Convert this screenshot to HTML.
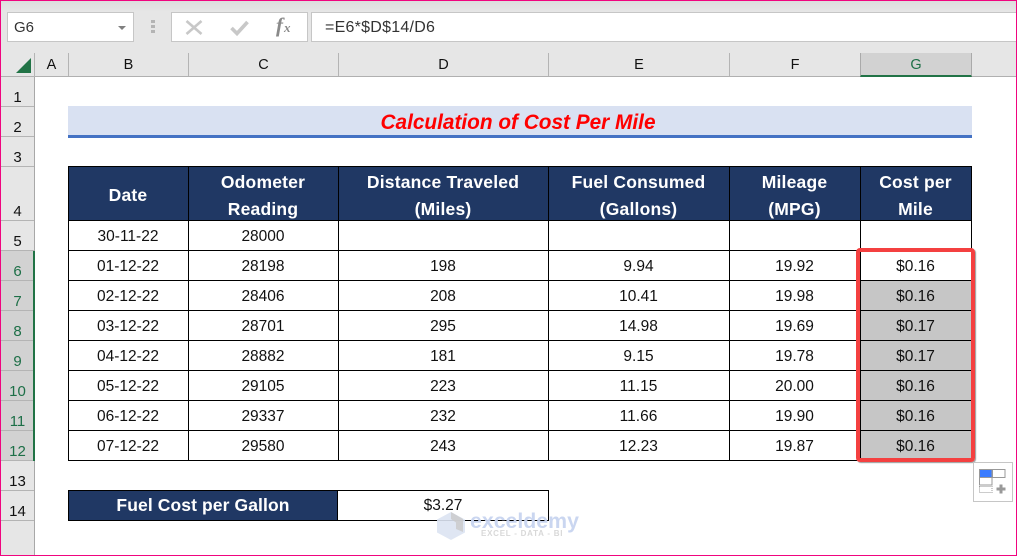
<!DOCTYPE html>
<html><head><meta charset="utf-8">
<style>
html,body{margin:0;padding:0}
body{width:1017px;height:556px;overflow:hidden;position:relative;background:#fff;font-family:"Liberation Sans",sans-serif;color:#111}
div{position:absolute;box-sizing:border-box}
.r{background:#000}
.t{text-align:center;font-size:15.5px;line-height:20px;height:20px;white-space:nowrap;margin-top:1px}
.h{text-align:center;font-size:17.5px;font-weight:bold;line-height:20px;height:20px;color:#fff;white-space:nowrap;letter-spacing:.2px}
.ch{top:53px;height:23px;text-align:center;font-size:14.5px;line-height:24px;border-right:1px solid #b4b4b4}
.rh{left:1px;width:33px;text-align:center;font-size:15px;border-bottom:1px solid #b4b4b4}
.rh span{position:absolute;left:0;width:33px;bottom:0;line-height:17px;text-align:center}
.s{background:#d2d2d2;color:#1d6f47}
.g{left:861px;width:110px;height:29px;background:#c6c6c6}
</style></head><body>
<!-- toolbar -->
<div style="left:0;top:0;width:1017px;height:53px;background:#e6e6e6"></div>
<div style="left:0;top:0;width:1017px;height:12px;background:linear-gradient(#dcdcdc,#e6e6e6)"></div>
<div style="left:7px;top:12px;width:127px;height:30px;background:#fff;border:1px solid #c6c6c6;font-size:15px;line-height:29px;padding-left:6px;color:#333">G6</div>
<div style="left:118px;top:26px;width:0;height:0;border-left:4px solid transparent;border-right:4px solid transparent;border-top:4px solid #808080"></div>
<div style="left:151px;top:20px;width:4px;height:3px;background:#b4b4b4"></div>
<div style="left:151px;top:25px;width:4px;height:3px;background:#b4b4b4"></div>
<div style="left:151px;top:30px;width:4px;height:3px;background:#b4b4b4"></div>
<div style="left:171px;top:12px;width:137px;height:30px;background:#fff;border:1px solid #c6c6c6"></div>
<svg style="position:absolute;left:171px;top:12px" width="137" height="30"><path d="M15.5 9L30.5 22M30.5 9L15.5 22" stroke="#c8c8c8" stroke-width="2.6" fill="none"/><path d="M60.5 16L66 21.5L76.5 10" stroke="#c8c8c8" stroke-width="3.6" fill="none"/><text x="105" y="20" font-family="Liberation Serif,serif" font-style="italic" font-weight="bold" font-size="21" fill="#8a8a8a">f</text><text x="113" y="20" font-family="Liberation Serif,serif" font-style="italic" font-weight="bold" font-size="13" fill="#8a8a8a">x</text></svg>
<div style="left:311px;top:12px;width:706px;height:30px;background:#fff;border:1px solid #c6c6c6;border-right:0;font-size:16px;line-height:29px;padding-left:13px;color:#333;letter-spacing:.25px">=E6*$D$14/D6</div>
<!-- column headers -->
<div style="left:0;top:42px;width:1017px;height:35px;background:#e6e6e6;border-bottom:1px solid #b0b0b0"></div>
<svg style="position:absolute;left:16px;top:58px" width="16" height="16"><path d="M15 0V15H0Z" fill="#217346"/></svg>
<div class="ch" style="left:35px;width:34px">A</div>
<div class="ch" style="left:69px;width:120px">B</div>
<div class="ch" style="left:189px;width:150px">C</div>
<div class="ch" style="left:339px;width:210px">D</div>
<div class="ch" style="left:549px;width:181px">E</div>
<div class="ch" style="left:730px;width:131px">F</div>
<div class="ch s" style="left:860px;width:112px;height:24px;border-left:1px solid #aaa;border-right:1px solid #aaa;border-bottom:2px solid #217346">G</div>
<div style="left:34px;top:53px;width:1px;height:24px;background:#b4b4b4"></div>
<!-- row headers -->
<div style="left:0;top:77px;width:35px;height:479px;background:#e6e6e6;border-right:1px solid #a8a8a8"></div>
<div class="rh" style="top:77px;height:30px"><span>1</span></div>
<div class="rh" style="top:107px;height:30px"><span>2</span></div>
<div class="rh" style="top:137px;height:30px"><span>3</span></div>
<div class="rh" style="top:167px;height:54px"><span>4</span></div>
<div class="rh" style="top:221px;height:30px"><span>5</span></div>
<div class="rh s" style="top:251px;height:30px;width:34px"><span>6</span></div>
<div class="rh s" style="top:281px;height:30px;width:34px"><span>7</span></div>
<div class="rh s" style="top:311px;height:30px;width:34px"><span>8</span></div>
<div class="rh s" style="top:341px;height:30px;width:34px"><span>9</span></div>
<div class="rh s" style="top:371px;height:30px;width:34px"><span>10</span></div>
<div class="rh s" style="top:401px;height:30px;width:34px"><span>11</span></div>
<div class="rh s" style="top:431px;height:30px;width:34px"><span>12</span></div>
<div class="rh" style="top:461px;height:30px"><span>13</span></div>
<div class="rh" style="top:491px;height:30px"><span>14</span></div>
<div style="left:33px;top:251px;width:2px;height:210px;background:#217346"></div>
<!-- title -->
<div style="left:68px;top:106px;width:904px;height:32px;background:#d9e1f2;border-bottom:3px solid #4472c4;text-align:center;color:#f00;font-weight:bold;font-style:italic;font-size:20.8px;line-height:34px;white-space:nowrap;padding-right:4px">Calculation of Cost Per Mile</div>
<!-- header bg -->
<div style="left:68px;top:166px;width:904px;height:55px;background:#203864"></div>
<!-- selection fill -->
<div class="g" style="top:281px"></div><div class="g" style="top:311px"></div><div class="g" style="top:341px"></div><div class="g" style="top:371px"></div><div class="g" style="top:401px"></div><div class="g" style="top:431px"></div>
<!-- grid lines -->
<div class="r" style="left:68px;top:166px;width:904px;height:1px"></div>
<div class="r" style="left:68px;top:220px;width:904px;height:1px"></div>
<div class="r" style="left:68px;top:250px;width:904px;height:1px"></div>
<div class="r" style="left:68px;top:280px;width:904px;height:1px"></div>
<div class="r" style="left:68px;top:310px;width:904px;height:1px"></div>
<div class="r" style="left:68px;top:340px;width:904px;height:1px"></div>
<div class="r" style="left:68px;top:370px;width:904px;height:1px"></div>
<div class="r" style="left:68px;top:400px;width:904px;height:1px"></div>
<div class="r" style="left:68px;top:430px;width:904px;height:1px"></div>
<div class="r" style="left:68px;top:460px;width:904px;height:1px"></div>
<div class="r" style="left:68px;top:166px;width:1px;height:295px"></div>
<div class="r" style="left:188px;top:166px;width:1px;height:295px"></div>
<div class="r" style="left:338px;top:166px;width:1px;height:295px"></div>
<div class="r" style="left:548px;top:166px;width:1px;height:295px"></div>
<div class="r" style="left:729px;top:166px;width:1px;height:295px"></div>
<div class="r" style="left:860px;top:166px;width:1px;height:295px"></div>
<div class="r" style="left:971px;top:166px;width:1px;height:295px"></div>
<!-- header text -->
<div class="h" style="left:68px;width:120px;top:185px">Date</div>
<div class="h" style="left:188px;width:150px;top:172px">Odometer</div>
<div class="h" style="left:188px;width:150px;top:199px">Reading</div>
<div class="h" style="left:338px;width:210px;top:172px">Distance Traveled</div>
<div class="h" style="left:338px;width:210px;top:199px">(Miles)</div>
<div class="h" style="left:548px;width:181px;top:172px">Fuel Consumed</div>
<div class="h" style="left:548px;width:181px;top:199px">(Gallons)</div>
<div class="h" style="left:729px;width:131px;top:172px">Mileage</div>
<div class="h" style="left:729px;width:131px;top:199px">(MPG)</div>
<div class="h" style="left:860px;width:111px;top:172px">Cost per</div>
<div class="h" style="left:860px;width:111px;top:199px">Mile</div>
<!-- rows -->
<div class="t" style="left:68px;width:120px;top:226px">30-11-22</div><div class="t" style="left:188px;width:150px;top:226px">28000</div>
<div class="t" style="left:68px;width:120px;top:256px">01-12-22</div><div class="t" style="left:188px;width:150px;top:256px">28198</div><div class="t" style="left:338px;width:210px;top:256px">198</div><div class="t" style="left:548px;width:181px;top:256px">9.94</div><div class="t" style="left:729px;width:131px;top:256px">19.92</div><div class="t" style="left:860px;width:111px;top:256px">$0.16</div>
<div class="t" style="left:68px;width:120px;top:286px">02-12-22</div><div class="t" style="left:188px;width:150px;top:286px">28406</div><div class="t" style="left:338px;width:210px;top:286px">208</div><div class="t" style="left:548px;width:181px;top:286px">10.41</div><div class="t" style="left:729px;width:131px;top:286px">19.98</div><div class="t" style="left:860px;width:111px;top:286px">$0.16</div>
<div class="t" style="left:68px;width:120px;top:316px">03-12-22</div><div class="t" style="left:188px;width:150px;top:316px">28701</div><div class="t" style="left:338px;width:210px;top:316px">295</div><div class="t" style="left:548px;width:181px;top:316px">14.98</div><div class="t" style="left:729px;width:131px;top:316px">19.69</div><div class="t" style="left:860px;width:111px;top:316px">$0.17</div>
<div class="t" style="left:68px;width:120px;top:346px">04-12-22</div><div class="t" style="left:188px;width:150px;top:346px">28882</div><div class="t" style="left:338px;width:210px;top:346px">181</div><div class="t" style="left:548px;width:181px;top:346px">9.15</div><div class="t" style="left:729px;width:131px;top:346px">19.78</div><div class="t" style="left:860px;width:111px;top:346px">$0.17</div>
<div class="t" style="left:68px;width:120px;top:376px">05-12-22</div><div class="t" style="left:188px;width:150px;top:376px">29105</div><div class="t" style="left:338px;width:210px;top:376px">223</div><div class="t" style="left:548px;width:181px;top:376px">11.15</div><div class="t" style="left:729px;width:131px;top:376px">20.00</div><div class="t" style="left:860px;width:111px;top:376px">$0.16</div>
<div class="t" style="left:68px;width:120px;top:406px">06-12-22</div><div class="t" style="left:188px;width:150px;top:406px">29337</div><div class="t" style="left:338px;width:210px;top:406px">232</div><div class="t" style="left:548px;width:181px;top:406px">11.66</div><div class="t" style="left:729px;width:131px;top:406px">19.90</div><div class="t" style="left:860px;width:111px;top:406px">$0.16</div>
<div class="t" style="left:68px;width:120px;top:436px">07-12-22</div><div class="t" style="left:188px;width:150px;top:436px">29580</div><div class="t" style="left:338px;width:210px;top:436px">243</div><div class="t" style="left:548px;width:181px;top:436px">12.23</div><div class="t" style="left:729px;width:131px;top:436px">19.87</div><div class="t" style="left:860px;width:111px;top:436px">$0.16</div>
<!-- red selection -->
<div style="left:856px;top:248px;width:119px;height:214px;border:4px solid #f44040;border-radius:4px;box-shadow:1px 1px 1px #999"></div>
<!-- fuel cost -->
<div style="left:68px;top:490px;width:481px;height:31px;border:1px solid #000"></div>
<div style="left:68px;top:490px;width:270px;height:31px;background:#203864;border:1px solid #000"></div>
<div class="h" style="left:68px;width:270px;top:495px;letter-spacing:.1px">Fuel Cost per Gallon</div>
<div class="t" style="left:338px;width:210px;top:495px">$3.27</div>
<!-- watermark -->
<svg style="position:absolute;left:437px;top:511px" width="29" height="30"><path d="M14 1L28 8.5V21.5L14 29L0 21.5V8.5Z" fill="#dbe3f2" opacity=".9"/><path d="M14 1L26 8V21L19 18V11.5L14 8Z" fill="#c9c9c9" opacity=".8"/></svg>
<div style="left:470px;top:509px;font-size:21.3px;font-weight:bold;color:#c8d4f0;line-height:24px;white-space:nowrap;opacity:.95">exceldemy</div>
<div style="left:481px;top:529px;font-size:8px;font-weight:bold;color:#d8d8d8;letter-spacing:.75px;line-height:10px;white-space:nowrap">EXCEL - DATA - BI</div>
<!-- paste options -->
<div style="left:973px;top:462px;width:40px;height:40px;background:#fff;border:1px solid #c6c6c6"></div>
<svg style="position:absolute;left:973px;top:462px" width="40" height="40"><rect x="6.5" y="7.5" width="12.5" height="8" fill="#3b7cff" stroke="#999"/><rect x="19.5" y="7.5" width="12.5" height="8" fill="#fff" stroke="#999"/><rect x="6.5" y="15.5" width="12.5" height="7.5" fill="#fff" stroke="#999"/><rect x="6.5" y="24.5" width="12.5" height="6" fill="#fff" stroke="#999" stroke-dasharray="1 1"/><path d="M26.5 22.5h3v3h3v3h-3v3h-3v-3h-3v-3h3z" fill="#999"/></svg>
<!-- pink frame -->
<div style="left:0;top:0;width:1017px;height:556px;border:1px solid #f0047f;z-index:9"></div>
</body></html>
